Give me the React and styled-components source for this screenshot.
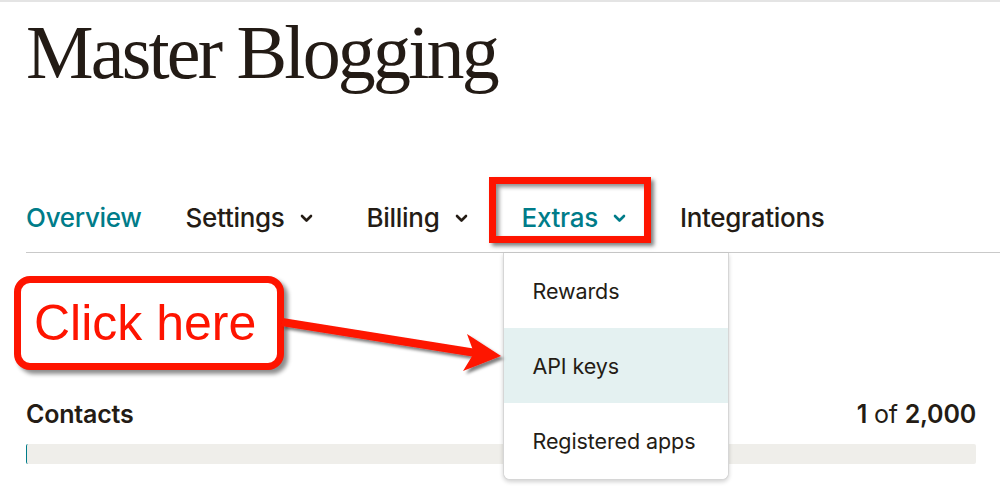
import React from "react";
import styled, { createGlobalStyle } from "styled-components";

const Global = createGlobalStyle`
  html, body { margin: 0; padding: 0; background: #fff; }
  body { font-family: Inter, "Noto Sans", sans-serif; color: #241c15; }
  * { box-sizing: border-box; }
`;

const RED = "#fe1400";
const TEAL = "#007c89";
const INK = "#241c15";

const Page = styled.div`
  position: relative;
  width: 1000px;
  height: 491px;
  overflow: hidden;
  border-top: 2px solid #e4e4e4;
`;

const Title = styled.h1`
  margin: 12px 0 0 26px;
  font-family: "Liberation Serif", "Times New Roman", serif;
  font-weight: 400;
  font-size: 76px;
  line-height: 76px;
  letter-spacing: -2.8px;
  color: #231b15;
  height: 76px;
`;

const Nav = styled.nav`
  margin: 110px 0 0 26px;
  display: flex;
  align-items: center;
  gap: 54px;
  height: 53px;
  padding-bottom: 16px;
  border-bottom: 1px solid #c9c9c9;
`;

const NavItem = styled.div`
  position: relative;
  display: flex;
  align-items: center;
  gap: 15px;
  font-size: 26px;
  font-weight: 500;
  letter-spacing: -0.3px;
  line-height: 30px;
  color: ${(p) => (p.$active ? TEAL : INK)};
  white-space: nowrap;
  margin-right: ${(p) => p.$mr || 0}px;
`;

const Chevron = ({ color }) => (
  <svg width="13" height="9" viewBox="0 0 13 9">
    <path d="M2 2 L6.5 6.5 L11 2" fill="none" stroke={color} strokeWidth="2.6" strokeLinecap="round" strokeLinejoin="round" />
  </svg>
);

const Highlight = styled.div`
  position: absolute;
  left: -33px;
  top: -26px;
  width: 162px;
  height: 66px;
  border: 7px solid ${RED};
  box-shadow: 3px 3px 4px rgba(0, 0, 0, 0.5), inset 3px 3px 4px rgba(0, 0, 0, 0.45);
  pointer-events: none;
`;

const Menu = styled.ul`
  position: absolute;
  left: -19px;
  top: 50px;
  width: 226px;
  margin: 0;
  padding: 0;
  list-style: none;
  background: #fff;
  border: 1px solid #d6d6d6;
  border-top: none;
  border-radius: 0 0 7px 7px;
  box-shadow: 0 2px 4px rgba(0, 0, 0, 0.18);
  overflow: hidden;
  z-index: 2;
`;

const MenuItem = styled.li`
  height: ${(p) => p.$h}px;
  display: flex;
  align-items: center;
  padding-left: 29px;
  font-size: 21.5px;
  font-weight: 400;
  letter-spacing: -0.1px;
  color: ${INK};
  background: ${(p) => (p.$selected ? "#e4f1f1" : "#fff")};
`;

const Callout = styled.div`
  position: absolute;
  left: 14px;
  top: 274px;
  width: 270px;
  height: 94px;
  border: 7px solid ${RED};
  border-radius: 16px;
  background: #fff;
  box-shadow: 4px 4px 4px rgba(0, 0, 0, 0.45);
  display: flex;
  align-items: center;
  padding-left: 13px;
  font-family: "Liberation Sans", Arial, sans-serif;
  font-size: 50px;
  color: ${RED};
  z-index: 3;
`;

const ArrowSvg = styled.svg`
  position: absolute;
  left: 270px;
  top: 300px;
  z-index: 3;
  overflow: visible;
`;

const Usage = styled.section`
  position: absolute;
  left: 26px;
  right: 24px;
  top: 397px;
`;

const UsageHead = styled.div`
  display: flex;
  justify-content: space-between;
  align-items: baseline;
  font-size: 25px;
  line-height: 30px;
  letter-spacing: -0.2px;
`;

const Label = styled.span`
  font-weight: 600;
`;

const Count = styled.span`
  font-weight: 400;
  b { font-weight: 600; }
`;

const Bar = styled.div`
  margin-top: 15px;
  height: 20px;
  background: #efeeea;
  border-radius: 2px;
  border-left: 1px solid ${TEAL};
`;

export default function App() {
  return (
    <>
      <Global />
      <Page>
        <Title>Master Blogging</Title>
        <Nav>
          <NavItem $active $mr={-10}>Overview</NavItem>
          <NavItem>
            Settings <Chevron color={INK} />
          </NavItem>
          <NavItem>
            Billing <Chevron color={INK} />
          </NavItem>
          <NavItem $active>
            Extras <Chevron color={TEAL} />
            <Highlight />
            <Menu>
              <MenuItem $h={75}>Rewards</MenuItem>
              <MenuItem $h={75} $selected>API keys</MenuItem>
              <MenuItem $h={76}>Registered apps</MenuItem>
            </Menu>
          </NavItem>
          <NavItem>Integrations</NavItem>
        </Nav>

        <Usage>
          <UsageHead>
            <Label>Contacts</Label>
            <Count>
              <b>1</b> of <b>2,000</b>
            </Count>
          </UsageHead>
          <Bar />
        </Usage>

        <Callout>Click here</Callout>
        <ArrowSvg width="240" height="80" viewBox="0 0 240 80">
          <defs>
            <filter id="sh" x="-20%" y="-50%" width="140%" height="200%">
              <feDropShadow dx="3" dy="3" stdDeviation="1.5" floodColor="#000" floodOpacity="0.5" />
            </filter>
          </defs>
          <g filter="url(#sh)" fill={RED}>
            <line x1="12" y1="20" x2="206" y2="51" stroke={RED} strokeWidth="8" />
            <polygon points="197,32 231,54 193,69 204,51" />
          </g>
        </ArrowSvg>
      </Page>
    </>
  );
}
